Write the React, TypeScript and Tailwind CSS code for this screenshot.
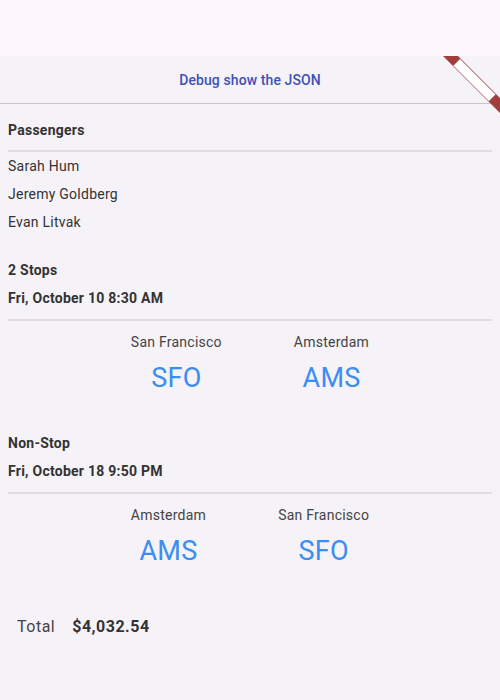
const trips = [
  {
    stops: "2 Stops",
    date: "Fri, October 10 8:30 AM",
    from: { city: "San Francisco", code: "SFO" },
    to: { city: "Amsterdam", code: "AMS" },
  },
  {
    stops: "Non-Stop",
    date: "Fri, October 18 9:50 PM",
    from: { city: "Amsterdam", code: "AMS" },
    to: { city: "San Francisco", code: "SFO" },
  },
];

const passengers = ["Sarah Hum", "Jeremy Goldberg", "Evan Litvak"];

const DebugBanner = () => (
  <svg
    className="absolute right-0 top-14 pointer-events-none"
    width="60"
    height="60"
    viewBox="0 0 60 60"
  >
    <polygon points="3,0 18,0 60,42 60,57" fill="#a03e3e" />
    <polygon points="20,3 55.5,38.5 49,45 13.5,9.5" fill="#ffffff" />
    <line x1="13.5" y1="9.5" x2="49" y2="45" stroke="#e3c4c4" strokeWidth="1" />
  </svg>
);

const Airport = ({ city, code }: { city: string; code: string }) => (
  <div className="flex flex-col items-center">
    <span className="h-5 leading-5 text-sm tracking-[0.25px] text-[#444]">{city}</span>
    <span className="mt-[10px] h-8 leading-8 text-[27px] text-[#3a8df5]">{code}</span>
  </div>
);

export default function App() {
  return (
    <div
      className="relative min-h-screen h-[700px] bg-[#f5f2f8] text-[#333] tracking-[0.25px]"
      style={{ fontFamily: "Roboto, 'Liberation Sans', sans-serif" }}
    >
      {/* App bar */}
      <div className="h-14 bg-[#fdf7fd]" />

      {/* Debug button */}
      <div className="h-12 flex items-center justify-center border-b border-[#cac5cc]">
        <button className="text-sm font-medium text-[#3f51b5] tracking-[0.1px]">
          Debug show the JSON
        </button>
      </div>

      <div className="px-2">
        {/* Passengers */}
        <div className="mt-4 h-5 leading-5 text-sm font-bold">Passengers</div>
        <div className="mt-[10px] h-[2px] bg-[#e0dce2]" />
        {passengers.map((p) => (
          <div key={p} className="h-7 flex items-center text-sm">
            {p}
          </div>
        ))}

        {/* Flights */}
        {trips.map((t, i) => (
          <div key={t.date} className={i === 0 ? "mt-5" : "mt-[35px]"}>
            <div className="h-7 flex items-center text-sm font-bold">{t.stops}</div>
            <div className="h-7 flex items-center text-sm font-bold">{t.date}</div>
            <div className="mt-[7px] h-[2px] bg-[#e0dce2]" />
            <div className="mt-[11px] flex justify-center gap-[72px]">
              <Airport {...t.from} />
              <Airport {...t.to} />
            </div>
          </div>
        ))}

        {/* Total */}
        <div className="mt-[48px] ml-[9px] h-6 flex items-center gap-[17px] text-base tracking-[0.5px]">
          <span className="text-[#444]">Total</span>
          <span className="font-bold">$4,032.54</span>
        </div>
      </div>

      <DebugBanner />
    </div>
  );
}
